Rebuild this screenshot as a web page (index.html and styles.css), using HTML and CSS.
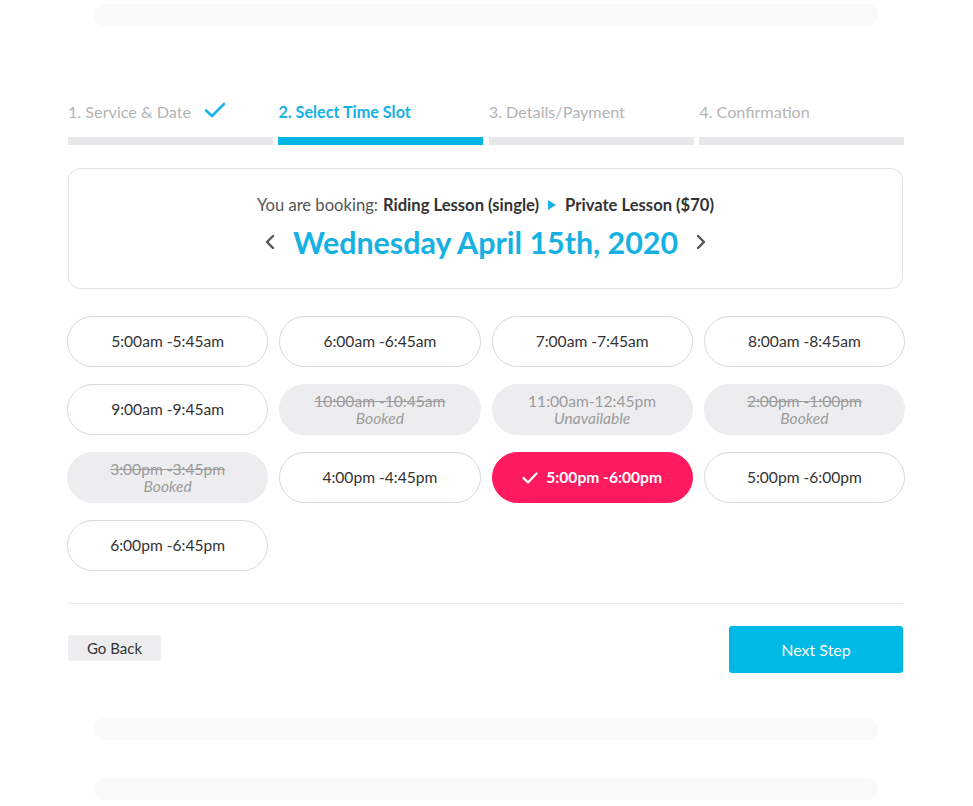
FILE: index.html
```html
<!DOCTYPE html>
<html>
<head>
<meta charset="utf-8">
<link rel="stylesheet" href="styles.css">
</head>
<body>
<div class="ghost ghost-top"></div>
<main class="wizard">
  <ol class="steps">
    <li class="step done">
      <span class="step-label">1. Service &amp; Date
        <svg class="step-check" width="22" height="16" viewBox="0 0 22 16"><path d="M2 8.5 L8 14 L20 2" fill="none" stroke="#1ab3e6" stroke-width="2.6" stroke-linecap="round" stroke-linejoin="round"/></svg>
      </span>
      <span class="step-bar"></span>
    </li>
    <li class="step active">
      <span class="step-label">2. Select Time Slot</span>
      <span class="step-bar"></span>
    </li>
    <li class="step">
      <span class="step-label">3. Details/Payment</span>
      <span class="step-bar"></span>
    </li>
    <li class="step">
      <span class="step-label">4. Confirmation</span>
      <span class="step-bar"></span>
    </li>
  </ol>

  <section class="booking-card">
    <p class="booking-line">You are booking: <strong>Riding Lesson (single)</strong>
      <svg class="crumb-arrow" width="8" height="10" viewBox="0 0 8 10"><path d="M0 0 L8 5 L0 10 Z" fill="#1ab3e6"/></svg>
      <strong>Private Lesson ($70)</strong></p>
    <div class="date-row">
      <svg class="chev" width="10" height="16" viewBox="0 0 10 16"><path d="M8 2 L2 8 L8 14" fill="none" stroke="#555" stroke-width="2.4" stroke-linecap="round" stroke-linejoin="round"/></svg>
      <h1 class="date">Wednesday April 15th, 2020</h1>
      <svg class="chev" width="10" height="16" viewBox="0 0 10 16"><path d="M2 2 L8 8 L2 14" fill="none" stroke="#555" stroke-width="2.4" stroke-linecap="round" stroke-linejoin="round"/></svg>
    </div>
  </section>

  <div class="slots">
    <button class="slot">5:00am -5:45am</button>
    <button class="slot">6:00am -6:45am</button>
    <button class="slot">7:00am -7:45am</button>
    <button class="slot">8:00am -8:45am</button>
    <button class="slot">9:00am -9:45am</button>
    <button class="slot off"><s>10:00am -10:45am</s><em>Booked</em></button>
    <button class="slot off"><span>11:00am-12:45pm</span><em>Unavailable</em></button>
    <button class="slot off"><s>2:00pm -1:00pm</s><em>Booked</em></button>
    <button class="slot off"><s>3:00pm -3:45pm</s><em>Booked</em></button>
    <button class="slot">4:00pm -4:45pm</button>
    <button class="slot selected"><svg class="sel-check" width="16" height="12" viewBox="0 0 16 12"><path d="M1.5 6 L6 10.5 L14.5 1.5" fill="none" stroke="#fff" stroke-width="2.2" stroke-linecap="round" stroke-linejoin="round"/></svg>5:00pm -6:00pm</button>
    <button class="slot">5:00pm -6:00pm</button>
    <button class="slot">6:00pm -6:45pm</button>
  </div>

  <hr class="divider">

  <div class="actions">
    <button class="btn-back">Go Back</button>
    <button class="btn-next">Next Step</button>
  </div>
</main>
<div class="ghost ghost-b1"></div>
<div class="ghost ghost-b2"></div>
</body>
</html>
```

FILE: styles.css
```css
* { box-sizing: border-box; }
html, body { margin: 0; padding: 0; background: #fff; }
body {
  font-family: Lato, "Open Sans", Arial, sans-serif;
  color: #333;
  width: 973px;
  height: 806px;
  overflow: hidden;
}
.ghost {
  width: 784px;
  height: 22px;
  margin-left: 94px;
  background: #fafafa;
  border-radius: 11px;
}
.ghost-top { margin-top: 4px; }
.ghost-b1 { margin-top: 45px; }
.ghost-b2 { margin-top: 38px; }

.wizard {
  width: 838px;
  margin-left: 67px;
  padding-top: 75px;
}
.steps {
  list-style: none;
  margin: 0 0 0 1px;
  padding: 0;
  display: grid;
  grid-template-columns: repeat(4, 1fr);
  column-gap: 5.5px;
  width: 836px;
}
.step { display: flex; flex-direction: column; }
.step-label {
  display: flex;
  align-items: center;
  gap: 13px;
  height: 20px;
  font-size: 16.2px;
  color: #b4b4b4;
  white-space: nowrap;
}
.step.active .step-label { color: #14b1e2; font-weight: 700; }
.step-check { margin-top: -2px; }
.step-bar {
  display: block;
  height: 8px;
  margin-top: 16px;
  background: #e8e8ea;
}
.step.active .step-bar { background: #00b5e2; }

.booking-card {
  margin: 23px 2px 0 1px;
  height: 121px;
  border: 1px solid #e2e2e4;
  border-radius: 12px;
  display: flex;
  flex-direction: column;
  align-items: center;
  padding-top: 26px;
}
.booking-line {
  margin: 0;
  font-size: 16.6px;
  line-height: 20px;
  color: #555;
  display: flex;
  align-items: center;
  gap: 5px;
}
.booking-line strong { font-weight: 700; color: #333; }
.crumb-arrow { margin: 0 4px; }
.date-row {
  display: flex;
  align-items: center;
  gap: 18px;
  margin-top: 10px;
}
.date {
  margin: 0;
  font-size: 30.4px;
  line-height: 34px;
  font-weight: 700;
  color: #14b1e2;
}

.slots {
  margin-top: 27px;
  display: grid;
  grid-template-columns: repeat(4, 1fr);
  column-gap: 11px;
  row-gap: 17px;
}
.slot {
  height: 51px;
  border: 1px solid #d9d9db;
  border-radius: 26px;
  background: #fff;
  font-family: inherit;
  font-size: 15.6px;
  color: #333;
  display: flex;
  flex-direction: column;
  align-items: center;
  justify-content: center;
  line-height: 17px;
  padding: 0;
}
.slot.off {
  background: #ededf0;
  border-color: #ededf0;
  color: #9b9b9b;
}
.slot.off s { text-decoration: line-through; }
.slot.off span { text-decoration: none; }
.slot.off em { font-style: italic; }
.slot.selected {
  background: #ff1a5f;
  border-color: #ff1a5f;
  color: #fff;
  font-weight: 700;
  flex-direction: row;
  gap: 8px;
}

.divider {
  margin: 32px 2px 0 1px;
  border: 0;
  border-top: 1px solid #e6e6e8;
}
.actions {
  margin-top: 22px;
  display: flex;
  justify-content: space-between;
  align-items: flex-start;
  padding: 0 2px 0 1px;
}
.btn-back {
  width: 93px;
  height: 26px;
  margin-top: 9px;
  border: 0;
  border-radius: 3px;
  background: #ededf0;
  font-family: inherit;
  font-size: 15px;
  color: #333;
  padding: 0;
}
.btn-next {
  width: 174px;
  height: 47px;
  border: 0;
  border-radius: 3px;
  background: #00b9e6;
  font-family: inherit;
  font-size: 16px;
  color: #fff;
  padding: 0;
}
```
